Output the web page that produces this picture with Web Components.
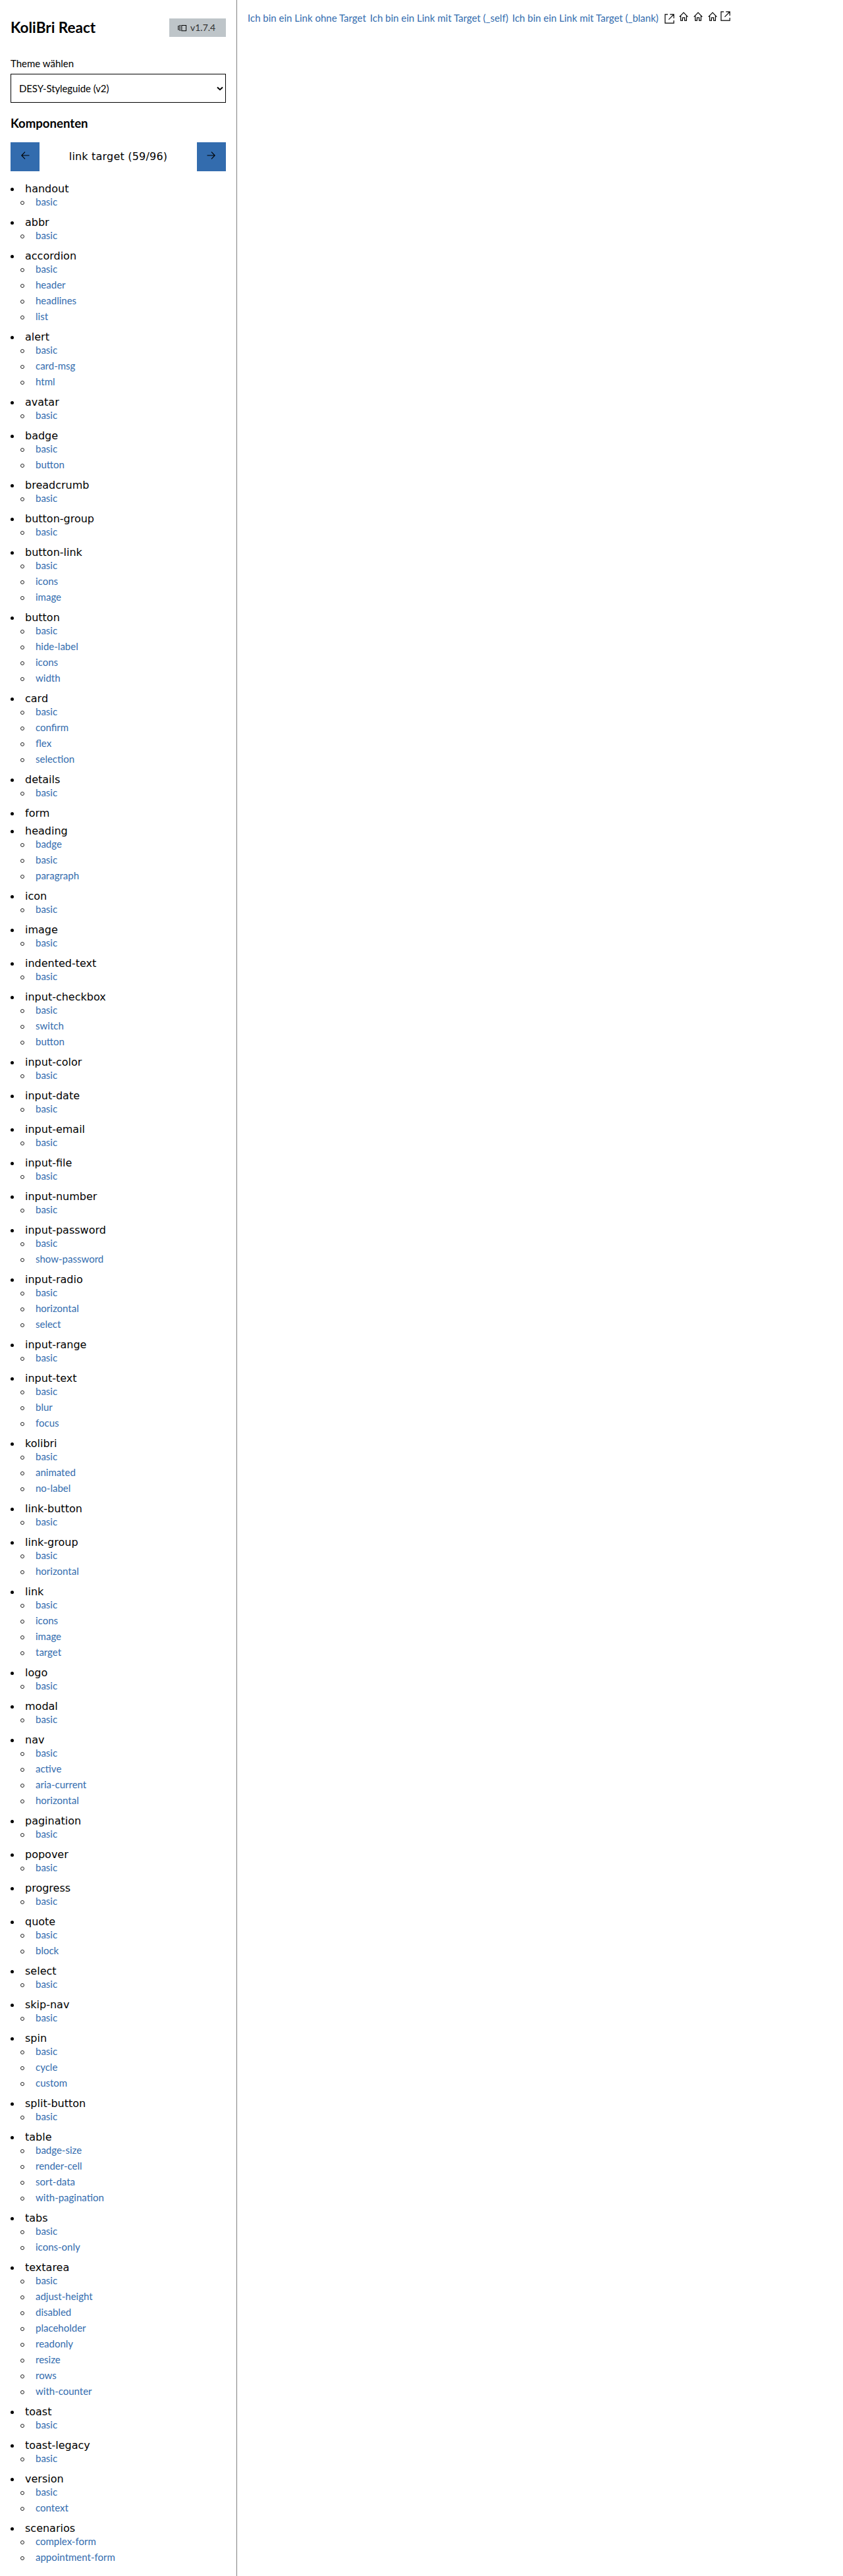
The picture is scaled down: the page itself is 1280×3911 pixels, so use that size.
<!DOCTYPE html>
<html lang="de">
<head>
<meta charset="utf-8">
<title>KoliBri React</title>
<style>
html, body { margin: 0; background: #fff; }
body { height: 3911px; overflow: hidden; }
</style>
</head>
<body>
<kol-app></kol-app>
<script>
const FONT = `font-family:Lato,"Open Sans",sans-serif;`;

const ICONS = {
  version: ['0 0 16 12', 14, 11, '<path d="M6.7 1.5h7.7v9.3H6.7zM4.8 1.5H3.5v8.8h1.3M1.9 2.6H.8v6.3h1.1"/>', 1.15],
  left: ['0 0 13 12', 13, 12, '<path d="M12.5 6H.8M6 .7.8 6 6 11.3"/>', 1.1],
  right: ['0 0 13 12', 13, 12, '<path d="M.5 6h11.7M7 .7 12.2 6 7 11.3"/>', 1.1],
  home: ['0 0 14 14', 14, 14, '<path d="M.6 7.7 7 1.2l6.4 6.5M2.6 6v7.2h2.8V8.9h3.2v4.3h2.8V6"/>', 1.2],
  external: ['0 0 15 15', 15, 15, '<path d="M5 .9H.9v13.2h13.2V10M8.3.9h5.8v5.8M14.1.9 6.4 8.6"/>', 1.2],
  chevron: ['0 0 10 7', 10, 7, '<path d="m1 1.4 4 3.8 4-3.8"/>', 2]
};

class KolIcon extends HTMLElement {
  connectedCallback() {
    const [box, w, h, path, stroke] = ICONS[this.getAttribute('name')];
    this.attachShadow({ mode: 'open' }).innerHTML = `
      <style>:host{display:block;flex:none;width:${w}px;height:${h}px;color:#000}svg{display:block}</style>
      <svg viewBox="${box}" width="${w}" height="${h}" fill="none" stroke="currentColor" stroke-width="${stroke}">${path}</svg>`;
  }
}

class KolLink extends HTMLElement {
  connectedCallback() {
    this.attachShadow({ mode: 'open' }).innerHTML = `
      <style>:host{display:block;flex:none;${FONT}font-size:15px;line-height:24px;white-space:nowrap}
      a{color:#336cae;text-decoration:none}</style>
      <a href="#"><slot></slot></a>`;
  }
}

class KolBadge extends HTMLElement {
  connectedCallback() {
    this.attachShadow({ mode: 'open' }).innerHTML = `
      <style>:host{display:flex;align-items:center;box-sizing:border-box;width:86px;height:28px;padding-left:13px;gap:5px;
      background:#bec5c9;color:#333;${FONT}font-size:14px;line-height:28px}</style>
      <kol-icon name="version"></kol-icon><span><slot></slot></span>`;
  }
}

class KolSelect extends HTMLElement {
  connectedCallback() {
    this.attachShadow({ mode: 'open' }).innerHTML = `
      <style>:host{display:block;${FONT}font-size:15px}
      .label{line-height:24px;height:28px}
      .field{display:flex;align-items:center;justify-content:space-between;box-sizing:border-box;height:44px;
      border:1px solid #000;padding:0 3px 0 12px}
      .value{letter-spacing:-.1px}</style>
      <div class="label">${this.getAttribute('label')}</div>
      <div class="field" role="combobox"><span class="value"><slot></slot></span><kol-icon name="chevron"></kol-icon></div>`;
  }
}

class KolPager extends HTMLElement {
  connectedCallback() {
    this.attachShadow({ mode: 'open' }).innerHTML = `
      <style>:host{display:flex;justify-content:space-between;height:44px;font:16px/44px Verdana,"DejaVu Sans",sans-serif;letter-spacing:.2px}
      button{display:flex;align-items:center;justify-content:center;width:44px;height:44px;border:0;padding:0 0 5px;background:#336cae}</style>
      <button aria-label="zurück"><kol-icon name="left"></kol-icon></button>
      <span><slot></slot></span>
      <button aria-label="weiter"><kol-icon name="right"></kol-icon></button>`;
  }
}

class NavGroup extends HTMLElement {
  connectedCallback() {
    const items = this.getAttribute('items').split(' ').filter(Boolean);
    this.attachShadow({ mode: 'open' }).innerHTML = `
      <style>:host{display:block;font:16px/27px Verdana,"DejaVu Sans",sans-serif;color:#000}
      .title{display:flex;height:27px}
      .title::before{content:"";flex:none;width:5px;height:5px;margin:12px 17px 0 0;border-radius:50%;background:#000}
      ul{list-style:none;margin:-6px 0 6px;padding:0 0 0 15px}
      li{display:flex;height:24px}
      li::before{content:"";flex:none;box-sizing:border-box;width:6px;height:6px;margin:11px 17px 0 0;border:1px solid #222;border-radius:50%}</style>
      <div class="title"><slot></slot></div>
      ${items.length ? `<ul>${items.map(i => `<li><kol-link>${i}</kol-link></li>`).join('')}</ul>` : ''}`;
  }
}

const TREE = `handout: basic
abbr: basic
accordion: basic header headlines list
alert: basic card-msg html
avatar: basic
badge: basic button
breadcrumb: basic
button-group: basic
button-link: basic icons image
button: basic hide-label icons width
card: basic confirm flex selection
details: basic
form:
heading: badge basic paragraph
icon: basic
image: basic
indented-text: basic
input-checkbox: basic switch button
input-color: basic
input-date: basic
input-email: basic
input-file: basic
input-number: basic
input-password: basic show-password
input-radio: basic horizontal select
input-range: basic
input-text: basic blur focus
kolibri: basic animated no-label
link-button: basic
link-group: basic horizontal
link: basic icons image target
logo: basic
modal: basic
nav: basic active aria-current horizontal
pagination: basic
popover: basic
progress: basic
quote: basic block
select: basic
skip-nav: basic
spin: basic cycle custom
split-button: basic
table: badge-size render-cell sort-data with-pagination
tabs: basic icons-only
textarea: basic adjust-height disabled placeholder readonly resize rows with-counter
toast: basic
toast-legacy: basic
version: basic context
scenarios: complex-form appointment-form`;

class KolSidebar extends HTMLElement {
  connectedCallback() {
    this.attachShadow({ mode: 'open' }).innerHTML = `
      <style>:host{display:block;flex:none;box-sizing:border-box;width:360px;padding:28px 16px 0;border-right:1px solid #808080;color:#000}
      header{display:flex;justify-content:space-between;height:28px}
      h1,h2{margin:0;${FONT}font-weight:700}
      h1{font-size:22.5px;line-height:28px}
      h2{font-size:18.6px;line-height:28px;height:28px;margin-top:17px}
      kol-select{margin-top:28px}
      kol-pager{margin-top:15px}
      nav{padding-top:13px}</style>
      <header><h1>KoliBri React</h1><kol-badge>v1.7.4</kol-badge></header>
      <kol-select label="Theme wählen">DESY-Styleguide (v2)</kol-select>
      <h2>Komponenten</h2>
      <kol-pager>link target (59/96)</kol-pager>
      <nav>${TREE.split('\n').map(l => { const [t, i] = l.split(':'); return `<nav-group items="${i.trim()}">${t}</nav-group>`; }).join('')}</nav>`;
  }
}

class LinkTargets extends HTMLElement {
  connectedCallback() {
    this.attachShadow({ mode: 'open' }).innerHTML = `
      <style>:host{display:flex;align-items:flex-start;padding:15px 0 0 16px}
      kol-link{margin-right:6px}
      kol-icon{margin-top:3px;margin-right:8px}
      .first{margin:6px 7px 0 3px}
      .near{margin-right:5px}
      .last{margin:2px 0 0}</style>
      <kol-link>Ich bin ein Link ohne Target</kol-link>
      <kol-link>Ich bin ein Link mit Target (_self)</kol-link>
      <kol-link>Ich bin ein Link mit Target (_blank)</kol-link>
      <kol-icon class="first" name="external"></kol-icon>
      <kol-icon name="home"></kol-icon>
      <kol-icon name="home"></kol-icon>
      <kol-icon class="near" name="home"></kol-icon>
      <kol-icon class="last" name="external"></kol-icon>`;
  }
}

class KolApp extends HTMLElement {
  connectedCallback() {
    this.attachShadow({ mode: 'open' }).innerHTML = `
      <style>:host{display:flex;height:3911px}</style>
      <kol-sidebar></kol-sidebar><link-targets></link-targets>`;
  }
}

customElements.define('kol-icon', KolIcon);
customElements.define('kol-link', KolLink);
customElements.define('kol-badge', KolBadge);
customElements.define('kol-select', KolSelect);
customElements.define('kol-pager', KolPager);
customElements.define('nav-group', NavGroup);
customElements.define('kol-sidebar', KolSidebar);
customElements.define('link-targets', LinkTargets);
customElements.define('kol-app', KolApp);
</script>
</body>
</html>
